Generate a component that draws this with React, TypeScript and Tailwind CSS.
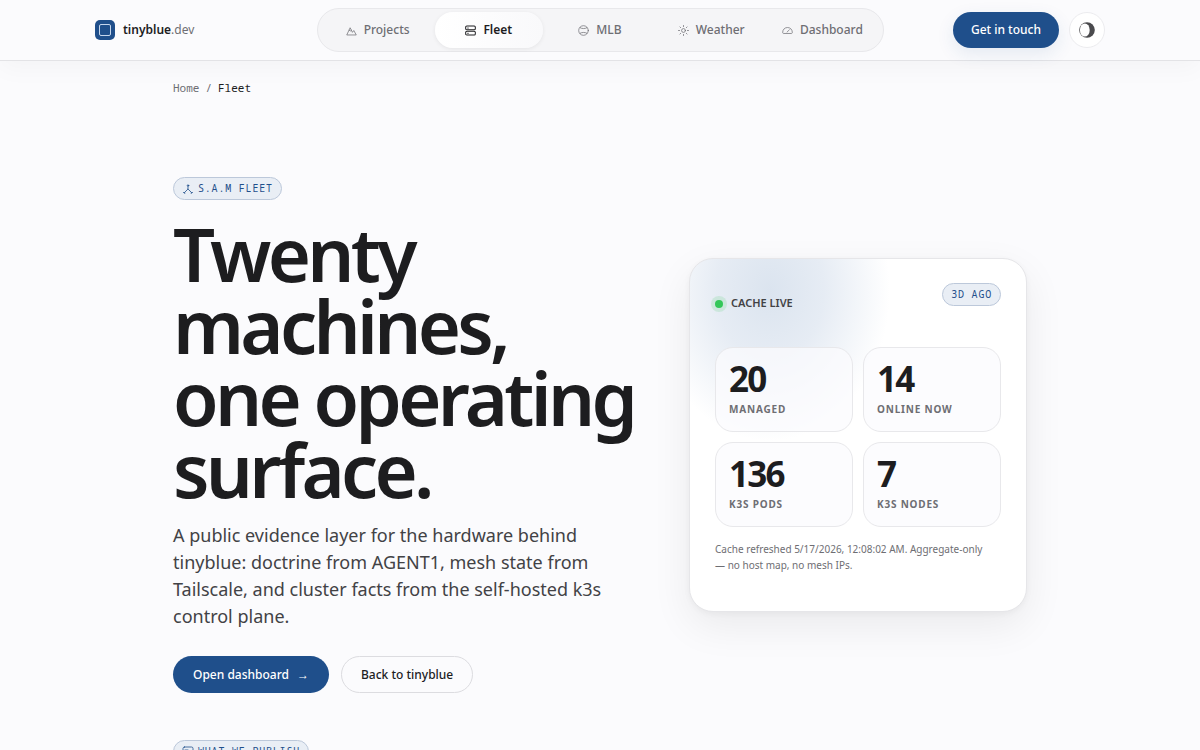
import React from 'react';

interface NavItem {
  label: string;
  icon: React.ReactNode;
  active?: boolean;
}

interface Stat {
  value: string;
  label: string;
}

const Icon: React.FC<{ children: React.ReactNode; className?: string }> = ({ children, className = 'h-3 w-3' }) => (
  <svg
    viewBox="0 0 24 24"
    fill="none"
    stroke="currentColor"
    strokeWidth="1.6"
    strokeLinecap="round"
    strokeLinejoin="round"
    aria-hidden="true"
    className={`shrink-0 ${className}`}
  >
    {children}
  </svg>
);

const navItems: NavItem[] = [
  {
    label: 'Projects',
    icon: (
      <>
        <path d="M2 21 L9 6 L14 16 L17 12 L22 21 Z" />
        <path d="M7 11.500 L9.500 13 L11.500 11.500" />
      </>
    ),
  },
  {
    label: 'Fleet',
    active: true,
    icon: (
      <g strokeWidth="2.200">
        <rect x="1.500" y="2" width="21" height="8.500" rx="2.500" />
        <rect x="1.500" y="13.500" width="21" height="8.500" rx="2.500" />
        <path d="M6 6.300 H7 M6 17.800 H7" />
      </g>
    ),
  },
  {
    label: 'MLB',
    icon: (
      <>
        <circle cx="12" cy="12" r="10.500" />
        <path d="M4.500 6 C8.500 8.500 15.500 8.500 19.500 6 M4.500 18 C8.500 15.500 15.500 15.500 19.500 18" />
      </>
    ),
  },
  {
    label: 'Weather',
    icon: (
      <>
        <circle cx="12" cy="12" r="4.200" />
        <path d="M12 1 V3.500 M12 20.500 V23 M1 12 H3.500 M20.500 12 H23 M4.200 4.200 L6 6 M18 18 L19.800 19.800 M4.200 19.800 L6 18 M18 6 L19.800 4.200" />
      </>
    ),
  },
  {
    label: 'Dashboard',
    icon: (
      <>
        <path d="M3 18.500 C1.500 18.500 1.500 17 1.500 16 C1.500 10 6 5.500 12 5.500 C18 5.500 22.500 10 22.500 16 C22.500 17 22.500 18.500 21 18.500 Z" />
        <path d="M11 15.500 L16 10.500" />
      </>
    ),
  },
];

const stats: Stat[] = [
  { value: '20', label: 'Managed' },
  { value: '14', label: 'Online now' },
  { value: '136', label: 'K3s pods' },
  { value: '7', label: 'K3s nodes' },
];

const Badge: React.FC<{ children: React.ReactNode; className?: string }> = ({ children, className = '' }) => (
  <span
    className={`inline-flex h-[23px] items-center gap-1 rounded-full border border-[#bcc8da] bg-[#e9eef5] px-2 font-['Noto_Sans_Mono','DejaVu_Sans_Mono',monospace] text-[10px] tracking-[0.08em] text-[#1f4f8b] uppercase ${className}`}
  >
    {children}
  </span>
);

const Header: React.FC = () => (
  <header className="relative border-b border-[#e3e3e6] bg-[#fbfbfd] shadow-[0_8px_24px_rgba(0,0,0,0.03)]">
    <div className="mx-auto grid h-[60px] max-w-[1010px] grid-cols-[1fr_auto_1fr] items-center">
      <a href="#" className="flex items-center gap-2 text-xs text-[#6e6e73]">
        <span className="flex h-5 w-5 items-center justify-center rounded-[5px] bg-[#1f4f8b]">
          <span className="h-3 w-3 rounded-[2px] border border-[#c5d6ec]" />
        </span>
        <span>
          <span className="font-semibold text-[#1d1d1f]">tinyblue</span>.dev
        </span>
      </a>

      <nav
        aria-label="Main"
        className="grid w-[567px] grid-cols-5 gap-[3px] rounded-full border border-[#e8e8eb] bg-[#f5f5f7] px-[6px] py-[3px]"
      >
        {navItems.map((item) => (
          <a
            key={item.label}
            href="#"
            aria-current={item.active ? 'page' : undefined}
            className={`flex h-9 items-center justify-center gap-[7px] rounded-full text-xs ${
              item.active
                ? 'bg-linear-to-r from-white to-[#f9f9fb] font-semibold text-[#1d1d1f] shadow-[0_1px_4px_rgba(0,0,0,0.07)]'
                : 'font-medium text-[#6e6e73]'
            }`}
          >
            <Icon className="h-[11px] w-[11px]">{item.icon}</Icon>
            {item.label}
          </a>
        ))}
      </nav>

      <div className="flex items-center justify-end gap-[10px]">
        <a
          href="#"
          className="flex h-9 items-center rounded-full bg-[#1f4f8b] px-[18px] text-xs font-medium text-white shadow-[0_6px_18px_rgba(31,79,139,0.10)]"
        >
          Get in touch
        </a>
        <button
          type="button"
          aria-label="Toggle theme"
          className="flex h-9 w-9 items-center justify-center rounded-full border border-[#ececef] bg-white text-[#4a4a4d]"
        >
          <svg viewBox="0 0 16 16" className="h-4 w-4" aria-hidden="true">
            <circle cx="8" cy="8" r="7.800" fill="currentColor" />
            <ellipse cx="5.800" cy="8" rx="4.900" ry="6.600" fill="white" />
          </svg>
        </button>
      </div>
    </div>
  </header>
);

const StatusCard: React.FC = () => (
  <aside
    aria-label="Fleet status"
    className="rounded-3xl border border-[#e6e6e9] bg-white bg-[radial-gradient(ellipse_120px_150px_at_80px_32px,#dbe4ef_0%,#e6ecf4_45%,transparent_100%)] px-[25px] py-6 shadow-[0_14px_40px_rgba(0,0,0,0.07),0_2px_6px_rgba(0,0,0,0.04)]"
  >
    <div className="flex h-[41px] items-center justify-between">
      <div className="flex items-center gap-2 text-[11px] font-semibold text-[#424245] uppercase">
        <span className="h-2 w-2 rounded-full bg-[#34c759] ring-4 ring-[#34c759]/15" />
        Cache live
      </div>
      <Badge className="self-start">3d ago</Badge>
    </div>

    <dl className="mt-[23px] grid grid-cols-2 gap-[10px]">
      {stats.map((stat) => (
        <div
          key={stat.label}
          className="flex h-[85px] flex-col-reverse justify-end rounded-[18px] border border-[#e8e8eb] bg-[#fbfbfd]/75 px-[13px] pt-[13px]"
        >
          <dt className="mt-1 text-[10px] leading-4 font-bold tracking-[0.08em] text-[#6e6e73] uppercase">
            {stat.label}
          </dt>
          <dd className="text-[35px] leading-9 font-bold tracking-tighter text-[#1d1d1f]">{stat.value}</dd>
        </div>
      ))}
    </dl>

    <p className="mt-[14px] mb-[14px] text-[10px] leading-4 text-[#6e6e73]">
      Cache refreshed 5/17/2026, 12:08:02 AM. Aggregate-only
      <br />— no host map, no mesh IPs.
    </p>
  </aside>
);

const App: React.FC = () => {
  return (
    <div className="min-h-screen bg-[#fbfbfd] font-['Noto_Sans',sans-serif] text-[#1d1d1f]">
      <Header />

      <main className="mx-auto max-w-[854px]">
        <nav
          aria-label="Breadcrumb"
          className="flex gap-[6px] pt-[19px] font-['Noto_Sans_Mono','DejaVu_Sans_Mono',monospace] text-[11px] leading-4 text-[#6e6e73]"
        >
          <a href="#">Home</a>
          <span>/</span>
          <span aria-current="page" className="text-[#1d1d1f]">
            Fleet
          </span>
        </nav>

        <section className="mt-[81px] grid grid-cols-[minmax(0,1.385fr)_minmax(0,1fr)] items-center gap-12">
          <div className="flex flex-col items-start">
            <Badge>
              <Icon>
                <circle cx="12" cy="5" r="1.500" />
                <path d="M12 6.500 V12 L5.500 18.500 M12 12 L18.500 18.500 M3 19 H5.500 V21 M21 19 H18.500 V21" />
              </Icon>
              S.A.M Fleet
            </Badge>
            <h1 className="mt-[18px] text-[74px] leading-[72px] font-semibold tracking-tighter">
              Twenty machines,
              <br />
              one operating surface.
            </h1>
            <p className="mt-4 text-lg leading-[27px] text-[#424245]">
              A public evidence layer for the hardware behind tinyblue: doctrine from AGENT1, mesh state from
              Tailscale, and cluster facts from the self-hosted k3s control plane.
            </p>
            <div className="mt-[26px] flex gap-3 text-xs font-medium">
              <a href="#" className="flex h-[37px] items-center gap-2 rounded-full bg-[#1f4f8b] px-5 text-white">
                Open dashboard <span aria-hidden="true">→</span>
              </a>
              <a href="#" className="flex h-[37px] items-center rounded-full border border-[#dcdce0] px-[19px]">
                Back to tinyblue
              </a>
            </div>
          </div>

          <StatusCard />
        </section>

        <section className="mt-[46px]">
          <Badge>
            <Icon>
              <rect x="2" y="4" width="20" height="16" rx="3" />
              <path d="M6 10 H12 M6 14 H16" />
            </Icon>
            What we publish
          </Badge>
        </section>
      </main>
    </div>
  );
};

export default App;
